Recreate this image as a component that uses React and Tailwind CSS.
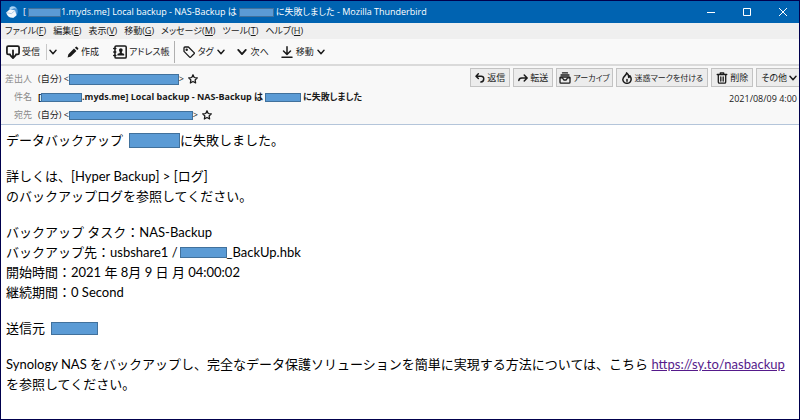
import clsx from "clsx";

const MENUS = [
  { label: "ファイル", accessKey: "F" },
  { label: "編集", accessKey: "E" },
  { label: "表示", accessKey: "V" },
  { label: "移動", accessKey: "G" },
  { label: "メッセージ", accessKey: "M" },
  { label: "ツール", accessKey: "T" },
  { label: "ヘルプ", accessKey: "H" },
];

const Icon = ({ children, className = "size-3", strokeWidth = 1.5 }) => (
  <svg
    viewBox="0 0 12 12"
    fill="none"
    stroke="currentColor"
    strokeWidth={strokeWidth}
    strokeLinecap="round"
    strokeLinejoin="round"
    className={clsx("shrink-0", className)}
    aria-hidden="true"
  >
    {children}
  </svg>
);

const ChevronIcon = ({ className = "size-2" }) => (
  <Icon className={className} strokeWidth={2.2}>
    <path d="M1.5 3.5 6 8.5l4.5-5" />
  </Icon>
);

const InboxIcon = () => (
  <Icon className="size-3.5">
    <path d="M3.500 8H2A1.200 1.200 0 0 1 .8 6.800V2.200A1.200 1.200 0 0 1 2 1h8a1.200 1.200 0 0 1 1.200 1.200v4.600A1.200 1.200 0 0 1 10 8H8.500" />
    <path d="M6 4.500v6.500M3.800 8.900 6 11.200l2.200-2.300" />
  </Icon>
);

const PencilIcon = () => (
  <Icon>
    <path
      d="M.6 11.400 1.400 8.200 7 2.600l2.400 2.400-5.600 5.600zM7.900 1.700l.8-.8a.9.9 0 0 1 1.300 0l1.100 1.100a.9.9 0 0 1 0 1.300l-.8.8z"
      fill="currentColor"
      stroke="none"
    />
  </Icon>
);

const AddressBookIcon = () => (
  <Icon className="size-3.5" strokeWidth={1.3}>
    <rect x="1.700" y=".8" width="9.600" height="10.400" rx="1" />
    <path d="M.6 3h1.800M.6 6h1.800M.6 9h1.800" />
    <circle cx="6.700" cy="4.300" r="1.600" fill="currentColor" stroke="none" />
    <path
      d="M3.800 9V7.900c0-.6 1.600-.8 2-1.100V5h1.800v1.800c.4.300 2 .5 2 1.100V9z"
      fill="currentColor"
      stroke="none"
    />
  </Icon>
);

const TagIcon = () => (
  <Icon strokeWidth={1.3}>
    <path d="M1 2v3.400l5.600 5.700a.8.8 0 0 0 1.100 0l3.400-3.400a.8.8 0 0 0 0-1.100L5.400 1H2a1 1 0 0 0-1 1z" />
    <circle cx="3.700" cy="3.700" r=".6" />
  </Icon>
);

const DownloadIcon = () => (
  <Icon>
    <path d="M6 .8v7.400M2.500 5 6 8.500 9.500 5M1 11.200h10" />
  </Icon>
);

const ReplyIcon = () => (
  <Icon className="size-2.5" strokeWidth={1.8}>
    <path d="M4 1 1.200 3.800 4 6.600M1.500 3.800h6a3 3 0 0 1 3 3c0 2-1.200 3.800-3.500 4" />
  </Icon>
);

const ForwardIcon = () => (
  <Icon className="size-2.5" strokeWidth={1.8}>
    <path d="M7.500 2.500 11 6 7.500 9.500M10.500 6H4.500C2.500 6 1.200 7.200 1 9" />
  </Icon>
);

const ArchiveIcon = () => (
  <Icon strokeWidth={1.3}>
    <path d="M3.500.9h5M2 3h8" />
    <rect x="1" y="5" width="10" height="6.200" rx="1" />
    <path d="M1.200 5.800h2.300L4.800 8h2.400l1.300-2.200h2.300" />
  </Icon>
);

const FlameIcon = () => (
  <Icon>
    <path d="M5.600.8c.5 2.300-3.800 3.400-3.800 6.700A4 4 0 0 0 6 11.300a4.100 4.100 0 0 0 4.200-4c0-1.500-.5-2.600-1.300-3.600-.1 1-.5 1.500-1.200 1.800C7.800 3.500 7.300 1.800 5.600.8z" />
    <path d="M6 7.500v1.800" />
  </Icon>
);

const TrashIcon = () => (
  <Icon strokeWidth={1.3}>
    <path d="M1.200 2.500h9.600M4.300 2.300V.9h3.400v1.400M2.300 2.700v7.300a1.200 1.200 0 0 0 1.200 1.200h5a1.200 1.200 0 0 0 1.200-1.200V2.700M4.800 5v4M7.200 5v4" />
  </Icon>
);

const StarButton = () => (
  <button type="button" aria-label="スター" className="ml-1">
    <Icon className="size-2.5">
      <path d="m6 .9 1.500 3.300 3.700.4-2.700 2.500.7 3.700L6 9l-3.200 1.800.7-3.700L.8 4.600l3.700-.4z" />
    </Icon>
  </button>
);

const ThunderbirdLogo = () => (
  <svg viewBox="0 0 14 14" className="size-3.5 shrink-0" aria-hidden="true">
    <path
      d="M4.500 3.500C5.500 1.300 8 .5 10 1.500c2.300 1.200 3.300 4 2.500 6.800-.7 2.500-2.500 4.200-4.700 4.500L4 9z"
      fill="#4b94d6"
    />
    <path
      d="M4.500 2.800C6.500.8 10 1 11.500 3.800c-1-.7-2-.8-3-.3L5 5z"
      fill="#a9d3f5"
    />
    <path
      d="m1.200 7.500 3.300-3 5.500.8 1.500 5-3 2.400C5 13.200 2 11.500 1.200 7.500z"
      fill="#f2f7fc"
    />
    <path
      d="m1.500 7.600 4.800 1.100L10 5.500"
      fill="none"
      stroke="#9dbfe0"
      strokeWidth=".8"
    />
  </svg>
);

// Filled box that hides a private name or address
const Mask = ({ className }) => (
  <span
    className={clsx(
      "inline-block shrink-0 border border-[#41719c] bg-[#5b9bd5]",
      className,
    )}
  />
);

const ToolButton = ({ icon, children }) => (
  <button type="button" className="flex items-center gap-0.5 whitespace-nowrap">
    {icon}
    {children}
  </button>
);

const ActionButton = ({ icon, children, className = "px-1" }) => (
  <button
    type="button"
    className={clsx(
      "flex h-[19px] items-center gap-0.5 border border-[#c3c3c3] bg-[#ececec] whitespace-nowrap",
      className,
    )}
  >
    {icon}
    {children}
  </button>
);

const TitleBar = () => (
  <header className="flex h-[22px] items-center bg-[#0063b1] pr-3 pl-1 text-white">
    <ThunderbirdLogo />
    <h1 className="ml-1 flex flex-1 items-center whitespace-nowrap">
      [
      <Mask className="ml-0.5 h-[9px] w-[33px]" />
      1.myds.me] Local backup - NAS-Backup は
      <Mask className="mx-0.5 h-[9px] w-[35px]" />
      に失敗しました - Mozilla Thunderbird
    </h1>
    <div className="flex items-center gap-7">
      <button type="button" aria-label="最小化">
        <svg viewBox="0 0 8 8" className="size-2" stroke="currentColor" fill="none">
          <path d="M0 4.500h8" />
        </svg>
      </button>
      <button type="button" aria-label="最大化">
        <svg viewBox="0 0 8 8" className="size-2" stroke="currentColor" fill="none">
          <path d="M.5.5h7v7h-7z" />
        </svg>
      </button>
      <button type="button" aria-label="閉じる">
        <svg viewBox="0 0 8 8" className="size-2" stroke="currentColor" fill="none">
          <path d="m0 0 8 8M8 0 0 8" />
        </svg>
      </button>
    </div>
  </header>
);

const MenuBar = () => (
  <nav className="flex h-4 items-center gap-[7px] bg-[#efefef] pl-1">
    {MENUS.map(({ label, accessKey }) => (
      <button key={label} type="button" className="whitespace-nowrap">
        {label}(<span className="underline">{accessKey}</span>)
      </button>
    ))}
  </nav>
);

const Toolbar = () => (
  <div className="flex h-[27px] items-center border-b-2 border-[#dadada] bg-[#f9f9f9] pl-[5px]">
    <ToolButton icon={<InboxIcon />}>受信</ToolButton>
    <div className="ml-1.5 flex h-4 items-center border-l border-[#c8c8c8] pl-0.5">
      <button type="button" aria-label="受信メニュー">
        <ChevronIcon />
      </button>
    </div>
    <div className="ml-2.5 flex items-center gap-3.5">
      <ToolButton icon={<PencilIcon />}>作成</ToolButton>
      <ToolButton icon={<AddressBookIcon />}>アドレス帳</ToolButton>
    </div>
    <div className="ml-1 h-[22px] border-l border-[#b0b0b0]" />
    <div className="ml-2 flex items-center gap-3">
      <button type="button" className="flex items-center gap-[3px]">
        <TagIcon />
        タグ
        <ChevronIcon />
      </button>
      <button type="button" className="flex items-center gap-1">
        <ChevronIcon className="size-2.5" />
        次へ
      </button>
      <button type="button" className="flex items-center gap-[3px]">
        <DownloadIcon />
        移動
        <ChevronIcon />
      </button>
    </div>
  </div>
);

const MessageHeader = () => (
  <section className="flex justify-between border-b border-[#b4c5da] bg-[#f8f8f8] pt-0.5">
    <dl className="grid grid-cols-[auto_1fr] gap-x-1.5 pl-1 leading-[18px] whitespace-nowrap">
      <dt className="pt-0.5 text-right text-[#8a8a8a]">差出人</dt>
      <dd className="flex items-center pt-0.5">
        (自分) &lt;
        <Mask className="h-[11px] w-[110px]" />
        &gt;
        <StarButton />
      </dd>
      <dt className="text-right text-[#8a8a8a]">件名</dt>
      <dd className="flex items-center font-bold">
        [
        <Mask className="h-[9px] w-[41px]" />
        .myds.me] Local backup - NAS-Backup は
        <Mask className="mx-0.5 h-[9px] w-9" />
        に失敗しました
      </dd>
      <dt className="text-right text-[#8a8a8a]">宛先</dt>
      <dd className="flex items-center">
        (自分) &lt;
        <Mask className="h-[9px] w-[124px]" />
        &gt;
        <StarButton />
      </dd>
    </dl>
    <div className="flex flex-col items-end">
      <div className="flex gap-[3px]">
        <ActionButton icon={<ReplyIcon />}>返信</ActionButton>
        <ActionButton icon={<ForwardIcon />}>転送</ActionButton>
        <ActionButton icon={<ArchiveIcon />} className="px-0.5 text-[8px]">
          アーカイブ
        </ActionButton>
        <ActionButton icon={<FlameIcon />} className="px-1 text-[8px]">
          迷惑マークを付ける
        </ActionButton>
        <ActionButton icon={<TrashIcon />}>削除</ActionButton>
        <button
          type="button"
          className="flex h-[19px] items-center gap-0.5 border border-r-0 border-[#c3c3c3] bg-[#ececec] pr-0.5 pl-1 whitespace-nowrap"
        >
          その他
          <ChevronIcon />
        </button>
      </div>
      <time dateTime="2021-08-09T04:00" className="pr-0.5 leading-6">
        2021/08/09 4:00
      </time>
    </div>
  </section>
);

const MessageBody = () => (
  <article className="flex flex-col gap-4 pt-[5px] pr-1 pb-[25px] pl-[5px] font-['Lato','Noto_Sans_CJK_JP',sans-serif] text-[13px] leading-5 text-black">
    <p className="flex items-center">
      データバックアップ
      <Mask className="ml-1.5 h-[15px] w-[51px]" />
      に失敗しました。
    </p>
    <p>
      詳しくは、[Hyper Backup] &gt; [ログ]
      <br />
      のバックアップログを参照してください。
    </p>
    <div>
      <p>バックアップ タスク：NAS-Backup</p>
      <p className="flex items-center">
        バックアップ先：usbshare1 /
        <Mask className="ml-0.5 h-[11px] w-[47px]" />
        _BackUp.hbk
      </p>
      <p>開始時間：2021 年 8月 9 日 月 04:00:02</p>
      <p>継続期間：0 Second</p>
    </div>
    <p className="flex items-center">
      送信元
      <Mask className="ml-1.5 h-[13px] w-[47px]" />
    </p>
    <p>
      Synology NAS をバックアップし、完全なデータ保護ソリューションを簡単に実現する方法については、こちら{" "}
      <a href="https://sy.to/nasbackup" className="text-[#551a8b] underline">
        https://sy.to/nasbackup
      </a>
      <br />
      を参照してください。
    </p>
  </article>
);

const App = () => (
  <main className="border border-[#00004d] bg-white font-['Open_Sans','Noto_Sans_CJK_JP',sans-serif] text-[#1a1a1a]">
    <div className="text-[9px] [font-feature-settings:'palt']">
      <TitleBar />
      <MenuBar />
      <Toolbar />
      <MessageHeader />
    </div>
    <MessageBody />
  </main>
);

export default App;
